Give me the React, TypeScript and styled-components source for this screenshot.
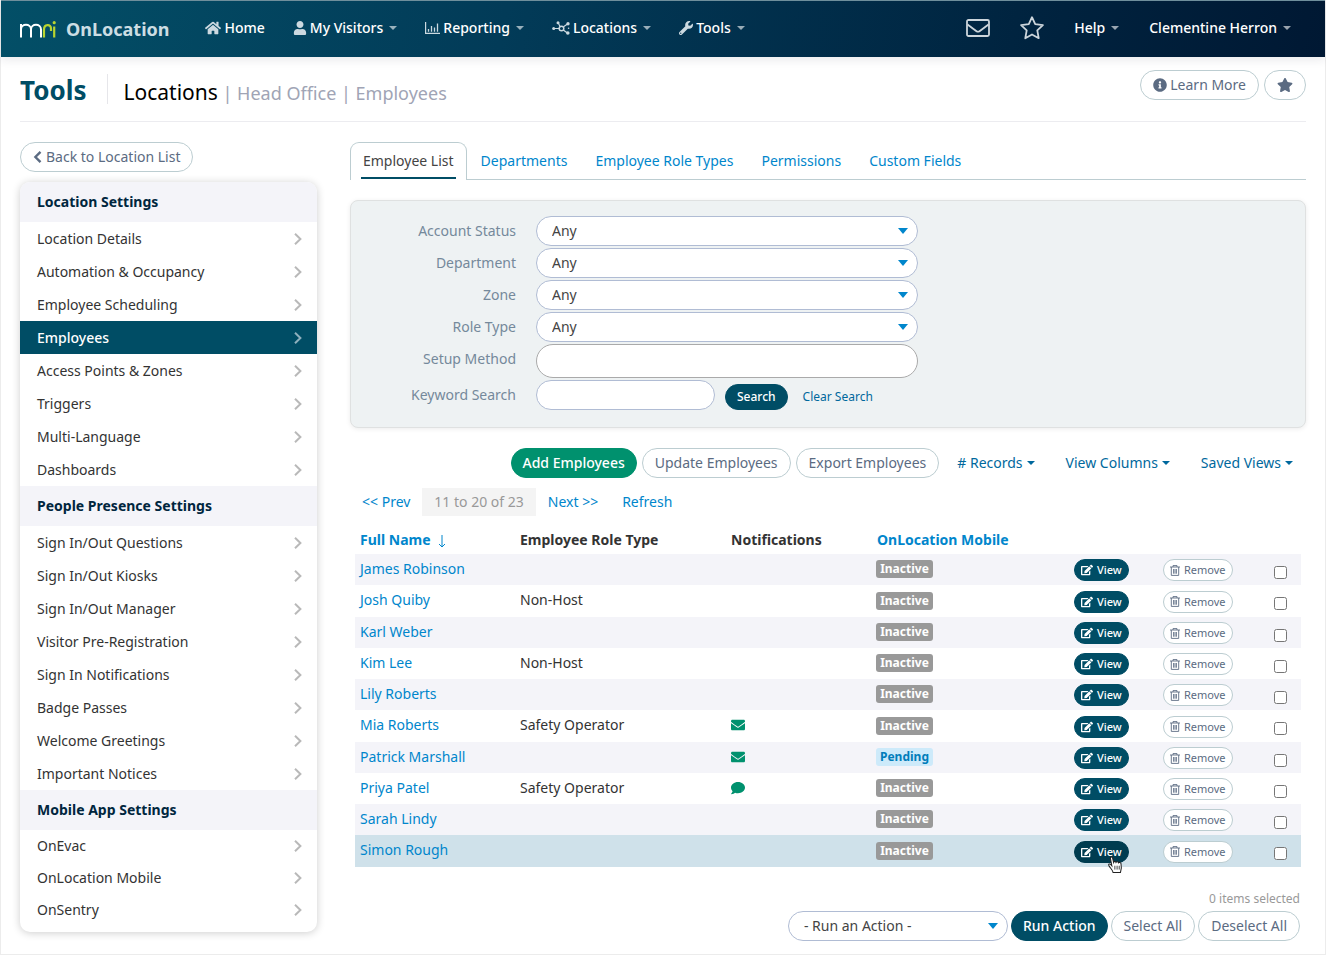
import React from "react";
import styled, { createGlobalStyle, css } from "styled-components";
import {
  FaHome,
  FaUser,
  FaWrench,
  FaStar,
  FaInfoCircle,
  FaEdit,
  FaEnvelope,
  FaComment,
} from "react-icons/fa";

const color = {
  teal: "#004d65",
  navy: "#00263e",
  link: "#0086cc",
  linkDark: "#00689d",
  green: "#00916e",
  text: "#333333",
  slate: "#5b6b82",
  label: "#75899b",
  outline: "#bccdd1",
  field: "#b0bcd4",
  stripe: "#f4f4f9",
  hover: "#cfe1ea",
};

const GlobalStyle = createGlobalStyle`
  * { box-sizing: border-box; }
  body {
    margin: 0;
    background: #fff;
    color: ${color.text};
    font-family: "Noto Sans", sans-serif;
    font-size: 14px;
    line-height: 20px;
  }
  a { text-decoration: none; }
  button, input, select { font-family: inherit; margin: 0; }
  ul { list-style: none; margin: 0; padding: 0; }
  h1, h2, h3, p { margin: 0; }
  svg { flex: none; }
`;

const Page = styled.div`
  border: 1px solid #ececec;
  border-top: 0;
`;

/* Top bar */

const TopBar = styled.header`
  display: flex;
  align-items: center;
  height: 57px;
  padding: 0 34px 2px 19px;
  border-top: 1px solid #6f8f9c;
  background: linear-gradient(100deg, #034f67 0%, #023b58 38%, #00233f 78%, #001833 100%);
  box-shadow: 0 4px 8px rgba(40, 40, 60, 0.08);
`;

const Brand = styled.a`
  display: flex;
  align-items: center;
  gap: 10px;
  margin-right: 36px;
  padding-top: 2px;
  color: #ccdde3;
  font-size: 18px;
  font-weight: 700;
  line-height: 24px;
`;

const NavList = styled.ul`
  display: flex;
  align-items: center;
  gap: 28px;
`;

const NavRight = styled(NavList)`
  gap: 30px;
  margin-left: auto;
`;

const NavLink = styled.a`
  display: flex;
  align-items: center;
  gap: 3px;
  color: #fff;
  font-weight: 500;

  > svg:first-child { color: #ccd9e0; }
`;

const Caret = styled.span<{ $dim?: boolean }>`
  margin-left: ${(p) => (p.$dim ? 3 : 1)}px;
  border: 4px solid transparent;
  border-top-color: currentColor;
  border-bottom: 0;
  opacity: ${(p) => (p.$dim ? 0.6 : 1)};
`;

/* Title row */

const TitleBar = styled.div`
  display: flex;
  align-items: center;
  height: 65px;
  margin: 0 19px 20px;
  border-bottom: 1px solid #ececf0;
`;

const Section = styled.h1`
  padding: 2px 21px 0 0;
  border-right: 1px solid #e6e6ea;
  color: ${color.teal};
  font-size: 26px;
  font-weight: 700;
  line-height: 28px;
`;

const Crumbs = styled.h2`
  flex: 1;
  padding: 6px 0 0 15px;
  color: #a0a4b5;
  font-size: 18px;
  font-weight: 400;
  line-height: 28px;

  strong {
    color: #000;
    font-size: 21px;
    font-weight: 400;
  }
`;

const TitleActions = styled.div`
  display: flex;
  gap: 5px;
  padding-bottom: 9px;
`;

/* Buttons */

type Tone = "outline" | "teal" | "green" | "plain";

const tones = {
  outline: css`
    border-color: ${color.outline};
    background: #fff;
    color: ${color.slate};
  `,
  teal: css`
    padding: 0 11px;
    border-color: ${color.teal};
    background: ${color.teal};
    color: #fff;
    font-weight: 500;
  `,
  green: css`
    padding: 0 11px;
    border-color: ${color.green};
    background: ${color.green};
    color: #fff;
    font-weight: 500;
  `,
  plain: css`
    border-color: transparent;
    background: transparent;
    color: ${color.linkDark};
  `,
};

const Button = styled.button<{ $tone?: Tone }>`
  display: inline-flex;
  align-items: center;
  gap: 3px;
  height: 30px;
  padding: 0 12px;
  border: 1px solid;
  border-radius: 15px;
  font-size: 14px;
  line-height: 20px;
  white-space: nowrap;
  cursor: pointer;
  ${(p) => tones[p.$tone ?? "outline"]}
`;

const MediumButton = styled(Button)`
  height: 26px;
  padding: 0 11px;
  font-size: 12px;
`;

const SmallButton = styled(Button)<{ $pressed?: boolean }>`
  gap: 4px;
  height: 22px;
  padding: 0 6px;
  font-size: 11px;
  line-height: 16px;
  ${(p) => p.$pressed && "background: #003c50; border-color: #003c50;"}
`;

/* Body */

const Body = styled.div`
  display: flex;
  gap: 33px;
  padding: 0 19px 13px;
`;

const Side = styled.aside`
  flex: none;
  width: 297px;
`;

const SideCard = styled.nav`
  margin: 10px 0 8px;
  padding-bottom: 6px;
  overflow: hidden;
  border-radius: 10px;
  background: #fff;
  box-shadow: 0 1px 8px rgba(0, 0, 0, 0.2);
`;

const SideHeading = styled.h3`
  padding: 10px 17px;
  background: ${color.stripe};
  color: ${color.navy};
  font-size: 14px;
  font-weight: 700;
  line-height: 20px;
`;

const SideLink = styled.a<{ $active?: boolean; $tight?: boolean }>`
  display: flex;
  align-items: center;
  justify-content: space-between;
  height: ${(p) => (p.$tight ? 32 : 33)}px;
  padding: 0 15px 0 17px;
  background: ${(p) => (p.$active ? color.teal : "transparent")};
  color: ${(p) => (p.$active ? "#fff" : color.text)};
  font-weight: ${(p) => (p.$active ? 500 : 400)};

  svg { color: ${(p) => (p.$active ? "#8fb0bd" : "#b9b9b9")}; }
`;

const Main = styled.main`
  flex: 1;
  min-width: 0;
`;

const Tabs = styled.div`
  display: flex;
  height: 38px;
  box-shadow: inset 0 -1px ${color.outline};
`;

const Tab = styled.a<{ $active?: boolean }>`
  padding: 9px 14px 0;
  color: ${color.link};

  ${(p) =>
    p.$active &&
    css`
      display: flex;
      flex-direction: column;
      justify-content: space-between;
      padding: 8px 10px 0;
      border: 1px solid ${color.outline};
      border-bottom: 0;
      border-radius: 9px 9px 0 0;
      background: #fff;
      color: #444;

      span { padding: 0 2px; }

      &::after {
        content: "";
        height: 2px;
        margin-bottom: 1px;
        background: ${color.teal};
      }
    `}
`;

/* Filters */

const Filters = styled.form`
  display: grid;
  grid-template-columns: 165px minmax(0, 382px);
  gap: 2px 20px;
  margin-top: 20px;
  padding: 15px 0 17px;
  border: 1px solid #dfe1e1;
  border-radius: 8px;
  background: #eef2f3;
  box-shadow: 0 1px 5px rgba(0, 0, 0, 0.08);
`;

const FilterLabel = styled.label`
  color: ${color.label};
  line-height: 30px;
  text-align: right;
`;

const SelectBox = styled.span<{ $action?: boolean }>`
  position: relative;
  display: block;
  ${(p) => p.$action && "width: 220px;"}

  select {
    display: block;
    appearance: none;
    width: 100%;
    height: 30px;
    padding: 0 24px 1px 15px;
    border: 1px solid ${color.field};
    border-radius: 15px;
    background: #fff;
    color: #444;
    font-size: 14px;
  }

  &::after {
    content: "";
    position: absolute;
    top: 12px;
    right: 10px;
    border: 5px solid transparent;
    border-top: 6px solid ${color.link};
    border-bottom: 0;
    pointer-events: none;
  }
`;

const TextField = styled.input<{ $tall?: boolean }>`
  width: ${(p) => (p.$tall ? "100%" : "179px")};
  height: ${(p) => (p.$tall ? 34 : 30)}px;
  padding: 0 15px;
  border: 1px solid ${(p) => (p.$tall ? "#aaa" : color.field)};
  border-radius: 17px;
  background: #fff;
  font-size: 14px;
`;

const SearchRow = styled.div`
  display: flex;
  align-items: center;
  gap: 10px;

  ${MediumButton} { margin-top: 3px; }
  ${MediumButton} + ${MediumButton} { padding: 0 4px; }
`;

/* List controls */

const Toolbar = styled.div`
  display: flex;
  justify-content: flex-end;
  gap: 5px;
  margin: 20px 0 10px;
`;

const Pager = styled.div`
  display: flex;
  line-height: 28px;

  a, span { padding: 0 12px; }
  a { color: ${color.link}; }
  span { background: #f4f4f4; color: #999; }
`;

const Table = styled.table`
  width: calc(100% - 10px);
  margin: 10px 5px 0;
  border-collapse: collapse;
  table-layout: fixed;

  th {
    height: 28px;
    padding: 0 5px;
    font-weight: 700;
    text-align: left;
    white-space: nowrap;
  }
  th a { color: ${color.link}; }
  th svg { margin-left: 4px; vertical-align: -3px; }
`;

const Col = styled.col<{ $w?: number }>`
  width: ${(p) => (p.$w ? `${p.$w}px` : "auto")};
`;

const Row = styled.tr<{ $hovered?: boolean }>`
  height: 31px;
  background: #fff;

  &:nth-child(4n + 2) { height: 32px; }
  &:nth-child(odd) { background: ${color.stripe}; }
  ${(p) => p.$hovered && `&&& { background: ${color.hover}; }`}

  td {
    padding: 0 5px;
    vertical-align: middle;
    white-space: nowrap;
  }
  td > a { display: block; height: 22px; color: ${color.link}; }
`;

const CellText = styled.span`
  display: block;
  height: 22px;
`;

const Notice = styled.span`
  display: flex;
  height: 16px;
  color: ${color.green};
`;

const Badge = styled.span<{ $pending?: boolean }>`
  display: block;
  width: 57px;
  margin: 0 0 1px -1px;
  border-radius: 3px;
  background: ${(p) => (p.$pending ? "#cdeafa" : "#999")};
  color: ${(p) => (p.$pending ? "#007dba" : "#fff")};
  font-size: 12px;
  font-weight: 700;
  line-height: 18px;
  text-align: center;
`;

const ActionSlot = styled.div`
  position: relative;
  display: flex;
  padding-top: 1px;
`;

const Pointer = styled.svg`
  position: absolute;
  top: 16px;
  left: 33px;
`;

const Check = styled.input`
  display: block;
  width: 13px;
  height: 13px;
  margin: 5px 0 0;
`;

const Selected = styled.p`
  margin: 22px 6px 2px;
  color: #999;
  font-size: 12px;
  text-align: right;
`;

const BulkActions = styled.div`
  display: flex;
  justify-content: flex-end;
  gap: 3px;
  margin-right: 6px;
`;

/* Icons */

const MriLogo = () => (
  <svg width="36" height="17" viewBox="0 0 36 17" fill="none" strokeWidth="1.800" role="img" aria-label="MRI">
    <path stroke="#fff" strokeWidth="2" d="M1 16.500V3M1 8.500C1 2.200 11 2.200 11 8.500V16.500M11 8.500C11 2.200 21 2.200 21 8.500V16.500" />
    <path stroke="#b8d430" strokeWidth="2.200" d="M24 16.500V8.500C24 3.300 31 2.600 31 7.500V10M34.200 16.500V5.500" />
    <circle cx="34.200" cy="1.700" r="1.600" fill="#b8d430" />
  </svg>
);

const ChartIcon = () => (
  <svg width="15" height="13" viewBox="0 0 15 13" fill="none" stroke="currentColor">
    <path strokeWidth="1.200" d="M.6 0V11.400H15" />
    <path strokeWidth="1.300" d="M3.500 7V9.800M6.500 4V9.800M9.500 5.500V9.800M12.500 1.500V9.800" />
  </svg>
);

const NodesIcon = () => (
  <svg width="18" height="14" viewBox="0 0 18 14" fill="none" stroke="currentColor">
    <circle cx="9.500" cy="7.500" r="2.300" strokeWidth="1.500" />
    <path strokeWidth="1.200" d="M2 7.500H7M8 5.500L6.300 2M11.500 5.800L15.500 3M11.300 9L15 11.800" />
    <g fill="currentColor" stroke="none">
      <circle cx="1.700" cy="7.500" r="1.500" />
      <circle cx="6" cy="1.700" r="1.500" />
      <circle cx="16" cy="2.700" r="1.700" />
      <circle cx="15.800" cy="12" r="1.800" />
      <circle cx="16.600" cy="7.300" r=".8" />
    </g>
  </svg>
);

const MailIcon = () => (
  <svg width="24" height="18" viewBox="0 0 24 18" fill="none" stroke="#ccd5db" strokeWidth="1.800" strokeLinejoin="round">
    <rect x="1" y="1" width="22" height="16" rx="1.500" />
    <path d="M1.500 5.500L10.500 12.200Q12 13.200 13.500 12.200L22.500 5.500" />
  </svg>
);

const StarIcon = () => (
  <svg width="24" height="24" viewBox="0 0 24 24" fill="none" stroke="#ccd5db" strokeWidth="1.800" strokeLinejoin="round">
    <path d="M12 1.200L15.200 8.200L22.900 9.100L17.300 14.400L18.700 22.200L12 18.500L5.300 22.200L6.700 14.400L1.100 9.100L8.800 8.200Z" />
  </svg>
);

const ChevronIcon = () => (
  <svg width="8" height="12" viewBox="0 0 8 12" fill="none" stroke="currentColor" strokeWidth="2">
    <path d="M1 .8L6.400 6L1 11.200" />
  </svg>
);

const BackIcon = () => (
  <svg width="10" height="12" viewBox="0 0 10 12" fill="none" stroke="currentColor" strokeWidth="2.400">
    <path d="M7.500 .9L2.400 6L7.500 11.100" />
  </svg>
);

const TrashIcon = () => (
  <svg width="10" height="11" viewBox="0 0 10 11" fill="none" stroke="currentColor">
    <path d="M0 2H10M3 2V.6H7V2M1.300 2V10.400H8.700V2M3.600 4V8.700M5 4V8.700M6.400 4V8.700" strokeWidth=".9" />
  </svg>
);

const ArrowDown = () => (
  <svg width="8" height="13" viewBox="0 0 8 13" fill="none" stroke="currentColor">
    <path d="M4 0V12M1 9L4 12L7 9" />
  </svg>
);

const HandPointer = () => (
  <Pointer width="17" height="18" viewBox="0 0 15 17" fill="#fff" stroke="#222" aria-hidden="true">
    <path d="M5.200 15.500C4.800 13.200 2.600 11.500 1.300 9.200C.4 7.600 1.900 7 2.900 8L4 9.200L2.700 2.300C2.400.6 4.400.3 4.800 1.900L5.700 6C6 5 7.700 4.900 8 6C8.500 5.100 10.100 5.200 10.400 6.400C11 5.700 12.400 5.900 12.700 7.200C13.300 10 13.500 11.500 12.200 15.500Z" />
    <path d="M6.900 9.200V12.800M9 9.200V12.800M11 9.200V12.800" strokeWidth=".8" />
  </Pointer>
);

/* Data */

const navItems = [
  { label: "Home", icon: <FaHome size={16} /> },
  { label: "My Visitors", icon: <FaUser size={14} />, menu: true },
  { label: "Reporting", icon: <ChartIcon />, menu: true },
  { label: "Locations", icon: <NodesIcon />, menu: true },
  { label: "Tools", icon: <FaWrench size={14} />, menu: true },
];

const sideGroups = [
  {
    title: "Location Settings",
    items: [
      "Location Details",
      "Automation & Occupancy",
      "Employee Scheduling",
      "Employees",
      "Access Points & Zones",
      "Triggers",
      "Multi-Language",
      "Dashboards",
    ],
  },
  {
    title: "People Presence Settings",
    items: [
      "Sign In/Out Questions",
      "Sign In/Out Kiosks",
      "Sign In/Out Manager",
      "Visitor Pre-Registration",
      "Sign In Notifications",
      "Badge Passes",
      "Welcome Greetings",
      "Important Notices",
    ],
  },
  { title: "Mobile App Settings", tight: true, items: ["OnEvac", "OnLocation Mobile", "OnSentry"] },
];

const tabs = ["Employee List", "Departments", "Employee Role Types", "Permissions", "Custom Fields"];

const filters = ["Account Status", "Department", "Zone", "Role Type"];

type Employee = { name: string; role?: string; notice?: "mail" | "chat"; pending?: boolean };

const employees: Employee[] = [
  { name: "James Robinson" },
  { name: "Josh Quiby", role: "Non-Host" },
  { name: "Karl Weber" },
  { name: "Kim Lee", role: "Non-Host" },
  { name: "Lily Roberts" },
  { name: "Mia Roberts", role: "Safety Operator", notice: "mail" },
  { name: "Patrick Marshall", notice: "mail", pending: true },
  { name: "Priya Patel", role: "Safety Operator", notice: "chat" },
  { name: "Sarah Lindy" },
  { name: "Simon Rough" },
];

const hoveredName = "Simon Rough";

export default function App() {
  return (
    <>
      <GlobalStyle />
      <Page>
        <TopBar>
          <Brand href="#">
            <MriLogo />
            OnLocation
          </Brand>
          <nav>
            <NavList>
              {navItems.map((item) => (
                <li key={item.label}>
                  <NavLink href="#">
                    {item.icon}
                    {item.label}
                    {item.menu && <Caret $dim />}
                  </NavLink>
                </li>
              ))}
            </NavList>
          </nav>
          <NavRight>
            <li>
              <NavLink href="#" aria-label="Messages"><MailIcon /></NavLink>
            </li>
            <li>
              <NavLink href="#" aria-label="Favourites"><StarIcon /></NavLink>
            </li>
            <li>
              <NavLink href="#">Help<Caret $dim /></NavLink>
            </li>
            <li>
              <NavLink href="#">Clementine Herron<Caret $dim /></NavLink>
            </li>
          </NavRight>
        </TopBar>

        <TitleBar>
          <Section>Tools</Section>
          <Crumbs>
            <strong>Locations</strong> | Head Office | Employees
          </Crumbs>
          <TitleActions>
            <Button type="button"><FaInfoCircle size={14} />Learn More</Button>
            <Button type="button" aria-label="Add to favourites"><FaStar size={16} /></Button>
          </TitleActions>
        </TitleBar>

        <Body>
          <Side>
            <Button type="button"><BackIcon />Back to Location List</Button>
            <SideCard>
              {sideGroups.map((group) => (
                <section key={group.title}>
                  <SideHeading>{group.title}</SideHeading>
                  <ul>
                    {group.items.map((item) => (
                      <li key={item}>
                        <SideLink href="#" $tight={group.tight} $active={item === "Employees"}>
                          {item}
                          <ChevronIcon />
                        </SideLink>
                      </li>
                    ))}
                  </ul>
                </section>
              ))}
            </SideCard>
          </Side>

          <Main>
            <Tabs>
              {tabs.map((tab, i) => (
                <Tab key={tab} href="#" $active={i === 0}><span>{tab}</span></Tab>
              ))}
            </Tabs>

            <Filters onSubmit={(e) => e.preventDefault()}>
              {filters.map((name) => (
                <React.Fragment key={name}>
                  <FilterLabel htmlFor={name}>{name}</FilterLabel>
                  <SelectBox>
                    <select id={name}><option>Any</option></select>
                  </SelectBox>
                </React.Fragment>
              ))}
              <FilterLabel htmlFor="setup">Setup Method</FilterLabel>
              <TextField id="setup" $tall />
              <FilterLabel htmlFor="keyword">Keyword Search</FilterLabel>
              <SearchRow>
                <TextField id="keyword" />
                <MediumButton $tone="teal">Search</MediumButton>
                <MediumButton type="button" $tone="plain">Clear Search</MediumButton>
              </SearchRow>
            </Filters>

            <Toolbar>
              <Button type="button" $tone="green">Add Employees</Button>
              <Button type="button">Update Employees</Button>
              <Button type="button">Export Employees</Button>
              {["# Records", "View Columns", "Saved Views"].map((name) => (
                <Button key={name} type="button" $tone="plain">{name}<Caret /></Button>
              ))}
            </Toolbar>

            <Pager>
              <a href="#">&lt;&lt; Prev</a>
              <span>11 to 20 of 23</span>
              <a href="#">Next &gt;&gt;</a>
              <a href="#">Refresh</a>
            </Pager>

            <Table>
              <colgroup>
                <Col $w={160} />
                <Col />
                <Col $w={146} />
                <Col $w={197} />
                <Col $w={89} />
                <Col $w={111} />
                <Col $w={32} />
              </colgroup>
              <thead>
                <tr>
                  <th><a href="#">Full Name <ArrowDown /></a></th>
                  <th>Employee Role Type</th>
                  <th>Notifications</th>
                  <th><a href="#">OnLocation Mobile</a></th>
                  <th aria-label="View" />
                  <th aria-label="Remove" />
                  <th aria-label="Select" />
                </tr>
              </thead>
              <tbody>
                {employees.map((e) => (
                  <Row key={e.name} $hovered={e.name === hoveredName}>
                    <td><a href="#">{e.name}</a></td>
                    <td><CellText>{e.role}</CellText></td>
                    <td>
                      {e.notice && (
                        <Notice>{e.notice === "mail" ? <FaEnvelope size={14} /> : <FaComment size={14} />}</Notice>
                      )}
                    </td>
                    <td><Badge $pending={e.pending}>{e.pending ? "Pending" : "Inactive"}</Badge></td>
                    <td>
                      <ActionSlot>
                        <SmallButton type="button" $tone="teal" $pressed={e.name === hoveredName}>
                          <FaEdit size={12} />View
                        </SmallButton>
                        {e.name === hoveredName && <HandPointer />}
                      </ActionSlot>
                    </td>
                    <td>
                      <ActionSlot>
                        <SmallButton type="button"><TrashIcon />Remove</SmallButton>
                      </ActionSlot>
                    </td>
                    <td><Check type="checkbox" aria-label={`Select ${e.name}`} /></td>
                  </Row>
                ))}
              </tbody>
            </Table>

            <Selected>0 items selected</Selected>
            <BulkActions>
              <SelectBox $action>
                <select aria-label="Action"><option>- Run an Action -</option></select>
              </SelectBox>
              <Button type="button" $tone="teal">Run Action</Button>
              <Button type="button">Select All</Button>
              <Button type="button">Deselect All</Button>
            </BulkActions>
          </Main>
        </Body>
      </Page>
    </>
  );
}
